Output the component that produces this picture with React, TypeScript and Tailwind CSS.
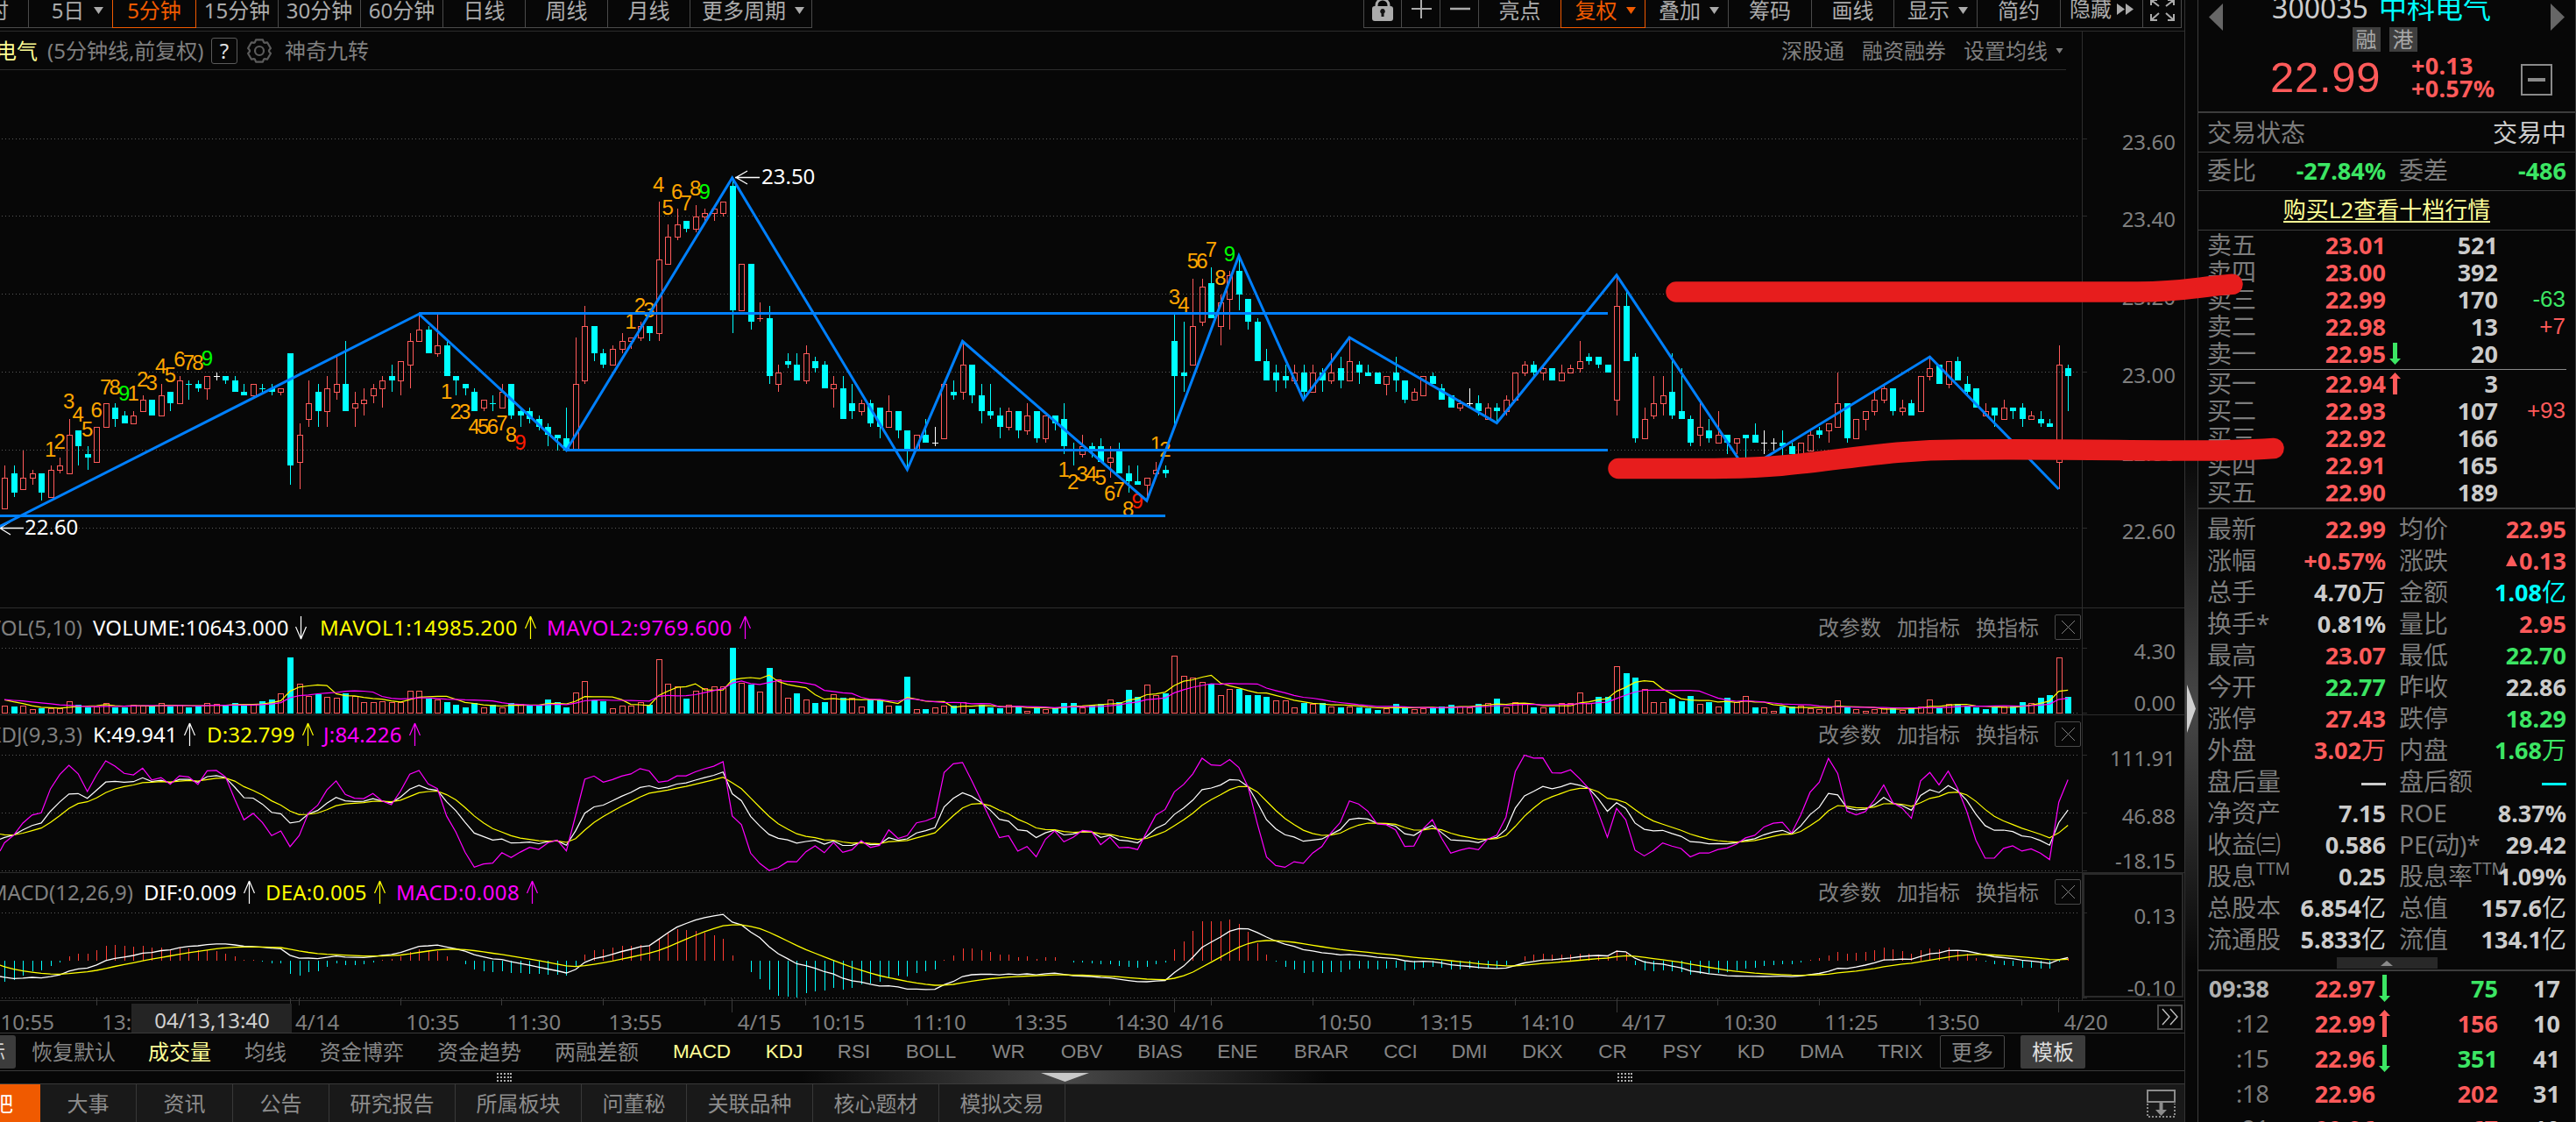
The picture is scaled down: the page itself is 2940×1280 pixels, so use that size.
import type { ReactNode } from "react";

const RED = "#ff5a5a";
const CYAN = "#00ffff";
const BLUE = "#0080ff";
const GRID = "#5a5a5a";
const LINE = "#2c2c2c";

// 5-minute candles in cents above 22.00: open close high low.
// Index FIRST is the first visible one, 0 is the open of 4/14 (48 candles a day).
const FIRST = -31;
const CANDLES = `65 73 76 65,74 69 76 68,70 73 80 70,73 74 75 71,74 69 74 67,68 75 76 68,75 76 78 74,74 84 88 74
85 81 85 76,79 78 81 75,77 86 86 77,86 92 92 86,91 88 92 86,89 87 90 87,87 89 90 87,90 93 94 90
93 89 93 89,89 94 97 89,95 92 95 90,92 98 99 92,97 97 98 93,97 96 98 95,96 99 99 93,99 99 100 98
99 98 99 97,98 95 99 95,95 94 97 94,94 97 97 94,96 96 97 95,96 95 97 94,95 96 96 94
105 76 105 71,77 84 87 70,88 92 98 86,95 90 97 86,90 96 99 86,95 97 104 93,97 90 108 90,91 92 95 86
92 93 96 89,94 96 97 92,96 98 99 91,99 98 102 95,98 103 103 94,102 108 110 96,108 111 115 108,111 105 112 105
105 107 115 104,107 99 108 99,99 98 99 94,97 96 97 94,95 90 96 90,91 93 93 90,92 92 94 90,91 95 97 91
97 89 97 88,90 89 91 86,90 88 91 87,88 86 89 85,86 84 87 81,84 83 84 80,83 80 91 80,80 97 109 80
98 112 117 97,112 105 112 103,105 102 106 101,102 106 107 102,106 108 110 105,108 109 109 106,109 112 113 108,112 110 112 108
110 129 144 108,128 135 138 128,135 138 142 134,139 137 139 136,137 140 143 136,140 141 142 139,141 142 142 139,141 144 144 140
148 116 150 110,116 128 128 116,128 113 128 111,114 114 118 113,114 99 117 97,97 100 102 95,103 102 105 101,102 98 105 98
98 105 107 97,103 101 104 100,102 96 103 96,96 97 99 91,96 88 99 88,92 90 97 88,90 92 93 89,92 87 93 86
91 86 91 83,86 90 94 86,90 85 90 83,85 80 85 75,80 84 84 80,84 82 88 82,82 82 86 81,83 97 97 83
95 94 98 93,95 102 108 93,102 94 102 92,94 90 97 87,90 89 97 88,89 86 91 83,86 90 91 85,90 85 90 83
85 89 92 84,90 83 90 82,83 89 89 82,89 87 89 85,88 81 92 79,80 80 82 76,79 81 84 78,81 80 82 78
81 77 83 77,77 78 81 73,80 74 82 74,74 72 76 69,72 71 76 71,71 73 73 67,74 75 77 74,75 74 76 73
108 99 115 86,100 99 113 95,102 112 124 102,113 122 124 112,123 114 127 114,112 118 120 107,119 125 126 111,126 120 130 116
119 113 119 111,113 103 114 103,103 98 106 98,100 98 102 95,99 98 102 96,98 100 102 97,100 95 102 93,95 100 102 95
100 98 101 95,98 100 105 97,101 98 104 96,98 103 109 98,102 100 103 97,100 99 102 99,100 97 100 97,97 99 99 94
100 98 104 95,98 93 98 92,93 95 96 93,94 99 99 94,99 97 100 97,96 93 97 93,94 91 94 91,91 92 93 90
92 92 96 91,92 90 94 89,88 91 92 88,91 90 92 87,90 93 94 89,93 100 100 93,100 102 103 99,102 100 103 99
100 101 102 98,101 98 101 98,98 100 102 98,100 101 102 100,101 103 108 100,104 103 105 102,104 102 104 101,102 100 102 100
93 117 125 89,117 103 121 103,104 83 105 82,83 88 91 83,89 92 99 88,92 94 99 89,95 89 105 88,90 88 101 88
88 82 89 81,84 86 93 81,85 83 88 82,82 84 90 82,84 82 84 79,82 83 83 79,84 83 84 77,84 82 87 82
82 82 85 79,82 82 83 80,82 81 85 78,81 79 82 79,79 82 82 79,80 84 85 80,85 84 86 83,85 87 87 82
86 92 100 86,92 83 92 82,83 88 88 83,88 90 90 85,90 93 95 89,93 96 97 92,96 90 96 89,90 91 93 89
92 89 93 89,90 99 99 90,99 101 104 98,102 97 102 97,97 103 103 96,103 98 104 98,97 95 99 94,96 91 96 91
89 90 92 89,91 89 91 86,88 91 93 88,91 90 91 88,91 88 92 86,88 89 90 88,88 87 90 86,87 86 88 86
77 102 107 70,101 99 102 90`
  .split(/[,\n]/)
  .map((s) => s.trim().split(" ").map(Number));

// volume, 194 = 4.30
const VOLUMES = [
  22, 20, 22, 11, 14, 14, 14, 35, 25, 18, 20, 29, 18, 18, 25, 22, 20, 29, 20, 25, 18, 20, 29, 27, 22, 29, 25, 27, 35, 41, 58,
  166, 89, 52, 56, 48, 45, 59, 50, 32, 32, 35, 34, 34, 68, 66, 44, 40, 33, 25, 18, 29, 18, 25, 16, 30, 27, 22, 25, 41, 33,
  18, 61, 95, 37, 35, 14, 22, 22, 32, 25, 162, 87, 79, 43, 66, 75, 79, 81,
  195, 90, 85, 63, 135, 100, 45, 59, 40, 30, 33, 56, 45, 45, 19, 41, 41, 22, 22, 109, 13, 12, 16, 22, 22, 33, 12, 25, 18,
  14, 24, 19, 8, 16, 13, 16, 30, 30, 18, 22, 27, 42, 33, 69, 48, 84, 53, 59,
  170, 111, 105, 92, 87, 53, 71, 72, 54, 54, 48, 37, 37, 16, 30, 27, 29, 21, 18, 21, 18, 14, 9, 15, 28, 16, 13, 14, 16, 19,
  26, 21, 16, 28, 29, 43, 16, 32, 29, 18, 16, 18, 29, 29, 61, 31, 48, 48,
  139, 119, 106, 71, 34, 32, 43, 35, 51, 27, 34, 19, 45, 34, 50, 18, 18, 8, 19, 19, 22, 15, 11, 18, 37, 18, 11, 8, 11, 15,
  16, 10, 14, 21, 40, 16, 27, 27, 22, 17, 11, 18, 21, 19, 33, 29, 46, 54, 165, 48,
];

const cx = (k: number) => 331 + 10.514 * k;
const priceY = (c: number) => 602.3 - (c - 60) * 4.437;
const volY = (v: number) => 813.6 - v * 0.383;
const kdjY = (v: number) => 927.2 - (v - 46.88) * 1.0118;
const macdY = (v: number) => 1096.4 - v * 4.21;

const toPoints = (values: number[], y: (v: number) => number) =>
  values.map((v, i) => `${cx(i + FIRST).toFixed(1)},${y(v).toFixed(1)}`).join(" ");

function average(n: number) {
  const all = [40, 40, 40, 40, 42, 50, 48, 44, 36, ...VOLUMES];
  return VOLUMES.map((_, i) => {
    const end = i + 10;
    return all.slice(end - n, end).reduce((a, b) => a + b, 0) / n;
  });
}

function kdj() {
  const highs = [110, 93, 93, 93, 82, 78, 78, 78, ...CANDLES.map((c) => c[2])];
  const lows = [60, 60, 60, 60, 60, 60, 60, 60, ...CANDLES.map((c) => c[3])];
  const out = { k: [] as number[], d: [] as number[], j: [] as number[] };
  let k = 15.5;
  let d = 23.5;
  CANDLES.forEach((c, i) => {
    const hi = Math.max(...highs.slice(i, i + 9));
    const lo = Math.min(...lows.slice(i, i + 9));
    k = (2 * k + ((c[1] - lo) / (hi - lo)) * 100) / 3;
    d = (2 * d + k) / 3;
    out.k.push(k);
    out.d.push(d);
    out.j.push(3 * k - 2 * d);
  });
  return out;
}

function macd() {
  let fast = 77.3;
  let slow = 81.7;
  let signal = -1.55;
  const dif = [fast - slow];
  const dea = [signal];
  CANDLES.slice(1).forEach((c) => {
    fast += (c[1] - fast) * (2 / 13);
    slow += (c[1] - slow) * (2 / 27);
    signal += (fast - slow - signal) * 0.2;
    dif.push(fast - slow);
    dea.push(signal);
  });
  return { dif, dea };
}

const ZIGZAG: [number, number][] = [
  [-31.6, 60.3], [14, 115], [30, 80], [48, 150], [67, 75], [73, 108], [93, 67], [103, 130],
  [110, 93], [115, 109], [131, 87], [144, 125], [158, 75], [178, 104], [192, 70],
];

// first candle of the run, digits, y of each digit
const TURNS: [number, string, number[]][] = [
  [-26, "123456789", [512, 503, 457, 472, 489, 467, 441, 441, 448]],
  [-17, "123456789", [448, 432, 436, 417, 427, 409, 413, 413, 408]],
  [17, "12345678R", [446, 469, 469, 486, 486, 486, 482, 495, 504]],
  [37, "123456789", [366, 348, 353, 210, 236, 218, 231, 214, 218]],
  [84, "12345678R", [535, 549, 540, 540, 544, 562, 558, 580, 571]],
  [94, "123456789", [506, 512, 338, 347, 297, 297, 284, 316, 289]],
];

function GridLines({ ys }: { ys: number[] }) {
  return (
    <g stroke={GRID} strokeDasharray="1 3" shapeRendering="crispEdges">
      {ys.map((y) => (
        <line key={y} x1={2} x2={2374} y1={y} y2={y} />
      ))}
    </g>
  );
}

function Axis({ top, height, labels, ticks, boxed }: { top: number; height: number; labels: [string, number][]; ticks: number[]; boxed?: boolean }) {
  return (
    <svg className="h-full w-[117px] shrink-0 overflow-visible" viewBox={`2377 ${top} 117 ${height}`}>
      {boxed && <rect x={2378} y={top + 1} width={113} height={height - 5} fill="none" stroke="#2a2a2a" strokeWidth={2} />}
      {ticks.map((y) => (
        <line key={y} x1={2377} x2={2382} y1={y} y2={y} stroke={LINE} />
      ))}
      {labels.map(([t, y]) => (
        <text key={t} x={2483} y={y + 9} textAnchor="end" fontSize={24} fill="#7f7f7f">{t}</text>
      ))}
    </svg>
  );
}

function PricePlot() {
  return (
    <svg className="h-full w-[2376px]" viewBox="0 80 2376 613">
      <GridLines ys={[158.5, 246.5, 335.5, 424.5, 513.5, 602.5]} />
      <g shapeRendering="crispEdges">
        {CANDLES.map(([o, c, h, l], i) => {
          const x = Math.round(cx(i + FIRST));
          const prev = i ? CANDLES[i - 1][1] : 0;
          const color = c > o ? RED : c < o ? CYAN : c > prev ? RED : c < prev ? CYAN : "#fff";
          const top = Math.round(priceY(Math.max(o, c)));
          const bottom = Math.round(priceY(Math.min(o, c)));
          return (
            <g key={i} fill={color}>
              <rect x={x} y={priceY(h)} width={1} height={top - priceY(h)} />
              <rect x={x} y={bottom} width={1} height={priceY(l) - bottom} />
              {c > o ? (
                <rect x={x - 2.5} y={top + 0.5} width={6} height={bottom - top} fill="none" stroke={color} />
              ) : (
                <rect x={x - 3} y={top} width={7} height={Math.max(bottom - top, 1)} />
              )}
            </g>
          );
        })}
      </g>
      <g fontSize={24} textAnchor="middle" fontFamily="Liberation Sans, Arial, sans-serif">
        {TURNS.map(([k, digits, ys]) =>
          ys.map((y, i) => (
            <text
              key={`${k}-${i}`}
              x={cx(k + i)}
              y={y + 8.5}
              fill={i < 8 ? "#ffa500" : digits[i] === "R" ? "#ff1a00" : "#00ff00"}
            >
              {i + 1}
            </text>
          )),
        )}
      </g>
      <g fill="none" stroke="#fff" strokeWidth={1.3}>
        <path d="M867 202.5H839M853 195l-13 7.5l13 7.5" />
        <path d="M27 602.5H0M12 595L0 602.5l12 7.5" />
      </g>
      <g fill="#fff" fontSize={24}>
        <text x={869} y={210}>23.50</text>
        <text x={28} y={610}>22.60</text>
      </g>
      <g fill="none" stroke={BLUE} strokeWidth={3}>
        <polyline points={ZIGZAG.map(([k, c]) => `${cx(k)},${priceY(c)}`).join(" ")} />
        <path strokeWidth={3} d="M478 357.5H1835M646 513.5H1835M0 588.5H1330" />
      </g>
    </svg>
  );
}

function VolumePlot() {
  return (
    <svg className="h-[81px] w-[2376px]" viewBox="0 734 2376 81">
      <GridLines ys={[739.5, 813.5]} />
      <g shapeRendering="crispEdges">
        {VOLUMES.map((v, i) => {
          const x = Math.round(cx(i + FIRST));
          const up = i === 0 || CANDLES[i][1] >= CANDLES[i - 1][1];
          const y = Math.round(volY(v));
          return up ? (
            <rect key={i} x={x - 2.5} y={y + 0.5} width={6} height={813 - y} fill="none" stroke={RED} />
          ) : (
            <rect key={i} x={x - 3} y={y} width={7} height={814 - y} fill={CYAN} />
          );
        })}
      </g>
      <polyline points={toPoints(average(5), volY)} fill="none" stroke="#ffff00" strokeWidth={1.2} />
      <polyline points={toPoints(average(10), volY)} fill="none" stroke="#ff00ff" strokeWidth={1.2} />
    </svg>
  );
}

function KdjPlot() {
  const { k, d, j } = kdj();
  return (
    <svg className="h-[139px] w-[2376px]" viewBox="0 856 2376 139">
      <GridLines ys={[861.5, 927.5, 993.5]} />
      <g fill="none" strokeWidth={1.2}>
        <polyline points={`0,957.5 ${toPoints(k, kdjY)}`} stroke="#fff" />
        <polyline points={`0,951.5 ${toPoints(d, kdjY)}`} stroke="#ffff00" />
        <polyline points={`0,971 ${toPoints(j, kdjY)}`} stroke="#ff00ff" />
      </g>
    </svg>
  );
}

function MacdPlot() {
  const { dif, dea } = macd();
  return (
    <svg className="h-[105px] w-[2376px]" viewBox="0 1036 2376 105">
      <GridLines ys={[1041.5, 1138.5]} />
      <g shapeRendering="crispEdges">
        {dif.map((v, i) => {
          const bar = 2 * (v - dea[i]);
          const y = macdY(bar);
          return (
            <rect
              key={i}
              x={Math.round(cx(i + FIRST))}
              y={Math.min(y, 1096.4)}
              width={1}
              height={Math.abs(y - 1096.4)}
              fill={bar > 0 ? "#ff3c32" : CYAN}
            />
          );
        })}
      </g>
      <g fill="none" strokeWidth={1.3}>
        <polyline points={`0,1114 ${toPoints(dif, macdY)}`} stroke="#fff" />
        <polyline points={`0,1101 ${toPoints(dea, macdY)}`} stroke="#ffff00" />
      </g>
    </svg>
  );
}

function ThinArrow({ down }: { down?: boolean }) {
  return (
    <svg className={`h-[28px] w-[14px] ${down ? "rotate-180" : ""}`} viewBox="0 0 14 28" fill="none" stroke="currentColor" strokeWidth={1.2}>
      <path d="M7.5 27V1M7.5 1L1.5 15M7.5 1l6 14" />
    </svg>
  );
}

function Panel({ name, nameWidth, values, height, children, axis }: {
  name: string;
  nameWidth: string;
  values: [string, string, boolean?][];
  height: string;
  children: ReactNode;
  axis: ReactNode;
}) {
  return (
    <div className={`flex shrink-0 border-b border-[#2c2c2c] ${height}`}>
      <div className="w-[2377px] shrink-0 border-r border-[#2c2c2c]">
        <div className="flex h-[40px] items-center pt-[3px] pr-[1px]">
          <div className={`mr-[12px] flex justify-end text-[#7f7f7f] ${nameWidth}`}>{name}</div>
          {values.map(([text, color, down]) => (
            <div key={text} className={`flex items-center gap-[7px] ${color}`}>
              {text}
              <ThinArrow down={down} />
            </div>
          ))}
          <div className="ml-auto flex items-center gap-[18px] text-[#7f7f7f]">
            <span>改参数</span>
            <span>加指标</span>
            <span>换指标</span>
            <span className="flex h-[29px] w-[30px] items-center justify-center rounded-[2px] border border-[#4a4a4a]">
              <svg className="h-[15px] w-[15px]" viewBox="0 0 15 15" stroke="#7f7f7f" strokeWidth={1}>
                <path d="M0 0l15 15M15 0L0 15" />
              </svg>
            </span>
          </div>
        </div>
        {children}
      </div>
      {axis}
    </div>
  );
}

const TIMES: [number, string][] = [
  [-32, "10:55"], [-21, "13:"], [12, "10:35"], [23, "11:30"], [34, "13:55"], [56, "10:15"], [67, "11:10"], [78, "13:35"], [89, "14:30"],
  [111, "10:50"], [122, "13:15"], [133, "14:10"], [155, "10:30"], [166, "11:25"], [177, "13:50"],
];
const DAYS: [number, string][] = [[0, "4/14"], [48, "4/15"], [96, "4/16"], [144, "4/17"], [192, "4/20"]];

function TimeAxis() {
  return (
    <div className="flex h-[37px] shrink-0 items-center justify-between border-b border-[#3a3a3a]">
      <svg className="h-[36px] w-[2440px] overflow-visible" viewBox="0 1142 2440 36">
        <g stroke="#3a3a3a" shapeRendering="crispEdges">
          {Array.from({ length: 20 }, (_, i) => cx(-21 + 11 * i)).map((x) => (
            <line key={x} x1={x} x2={x} y1={1139} y2={1147} />
          ))}
          {DAYS.map(([k]) => (
            <line key={k} x1={cx(k)} x2={cx(k)} y1={1139} y2={1155} />
          ))}
        </g>
        <g fontSize={24} fill="#7f7f7f">
          {TIMES.map(([k, t]) => (
            <text key={t} x={cx(k) + 6} y={1175}>{t}</text>
          ))}
          {DAYS.map(([k, t]) => (
            <text key={t} x={cx(k) + 6} y={1175}>{t}</text>
          ))}
        </g>
        <rect x={150} y={1145} width={183} height={33} fill="#242424" />
        <text x={242} y={1173} textAnchor="middle" fontSize={24} fill="#d0d0d0">04/13,13:40</text>
      </svg>
      <div className="mr-[2px] flex h-[29px] w-[29px] items-center justify-center border-2 border-[#4a4a4a]">
        <svg className="h-[20px] w-[20px]" viewBox="0 0 20 20" fill="none" stroke="#c0c0c0" strokeWidth={1.4}>
          <path d="M1 1l8 9l-8 9M10 1l8 9l-8 9" />
        </svg>
      </div>
    </div>
  );
}

const PERIODS: [string, string, boolean?][] = [
  ["分时", "w-[33px]"],
  ["5日", "w-[96px]", true],
  ["5分钟", "w-[95px]"],
  ["15分钟", "w-[94px]"],
  ["30分钟", "w-[94px]"],
  ["60分钟", "w-[94px]"],
  ["日线", "w-[94px]"],
  ["周线", "w-[94px]"],
  ["月线", "w-[94px]"],
  ["更多周期", "w-[139px]", true],
];

const TOOLS: [string, string, boolean?][] = [
  ["亮点", "w-[94px]"],
  ["复权", "w-[96px]", true],
  ["叠加", "w-[95px]", true],
  ["筹码", "w-[95px]"],
  ["画线", "w-[94px]"],
  ["显示", "w-[95px]", true],
  ["简约", "w-[95px]"],
];

function Caret() {
  return (
    <svg className="h-[8px] w-[11px]" viewBox="0 0 11 8" fill="currentColor">
      <path d="M0 0h11L5.5 8z" />
    </svg>
  );
}

function ToolCell({ label, width, caret, active }: { label: string; width: string; caret?: boolean; active?: boolean }) {
  return (
    <div
      className={`flex h-[32px] shrink-0 items-start justify-center border-r border-b leading-[24px] ${width} ${
        active ? "border-[#f05a00] text-[#f05a00] shadow-[-1px_0_0_#f05a00]" : "border-[#4a4a4a]"
      }`}
    >
      <span className={`flex items-center ${caret ? (label === "5日" ? "gap-[11px] pl-[16px]" : "gap-[10px] pl-[5px]") : ""}`}>
        {label}
        {caret && <Caret />}
      </span>
    </div>
  );
}

function Toolbar() {
  return (
    <div className="flex h-[36px] shrink-0 overflow-hidden border-b border-[#2c2c2c] text-[#ababab]">
      {PERIODS.map(([label, width, caret], i) =>
        i === 0 ? (
          <div key={label} className="flex h-[32px] w-[33px] shrink-0 justify-end border-r border-b border-[#4a4a4a] pr-[22px] leading-[24px]">
            {label}
          </div>
        ) : (
          <ToolCell key={label} label={label} width={width} caret={caret} active={i === 2} />
        ),
      )}
      <div className="ml-auto flex pr-[3px]">
        <div className="flex h-[32px] w-[44px] justify-center border-x border-b border-[#4a4a4a]">
          <svg className="h-[24px] w-[26px]" viewBox="0 0 26 24">
            <path d="M6 8V6a7 7 0 0 1 14 0v2" fill="none" stroke="#ababab" strokeWidth={3} />
            <rect x={1} y={7} width={24} height={17} rx={3} fill="#ababab" />
            <path d="M13 10a3 3 0 0 1 1.5 5.5V19h-3V15.5A3 3 0 0 1 13 10z" fill="#111" />
          </svg>
        </div>
        <div className="flex h-[32px] w-[44px] justify-center border-r border-b border-[#4a4a4a]">
          <svg className="h-[22px] w-[24px]" viewBox="0 0 24 22" stroke="#ababab" strokeWidth={2}>
            <path d="M1 10h23M12 0v21" />
          </svg>
        </div>
        <div className="flex h-[32px] w-[44px] justify-center border-r border-b border-[#4a4a4a]">
          <svg className="h-[22px] w-[24px]" viewBox="0 0 24 22" stroke="#ababab" strokeWidth={2.5}>
            <path d="M1 10h23" />
          </svg>
        </div>
        {TOOLS.map(([label, width, caret], i) => (
          <ToolCell key={label} label={label} width={width} caret={caret} active={i === 1} />
        ))}
        <div className="flex h-[32px] w-[94px] items-start justify-center gap-[6px] border-r border-b border-[#4a4a4a] leading-[20px]">
          隐藏
          <svg className="mt-[4px] h-[13px] w-[19px]" viewBox="0 0 19 13" fill="#ababab">
            <path d="M0 0l9 6.5L0 13zM10 0l9 6.5l-9 6.5z" />
          </svg>
        </div>
        <div className="flex h-[32px] w-[44px] justify-center border-r border-b border-[#4a4a4a]">
          <svg className="h-[24px] w-[28px]" viewBox="0 0 28 24" fill="none" stroke="#ababab" strokeWidth={2}>
            <path d="M1 6V0h7M1 0l9 7M27 6V0h-7M27 0l-9 7M1 16v7h7M1 23l9-8M27 16v7h-7M27 23l-9-8" />
          </svg>
        </div>
      </div>
    </div>
  );
}

// six rounded teeth
const GEAR = Array.from({ length: 6 }, (_, n) =>
  [[-17, 13.2], [17, 13.2], [27, 11], [33, 11]].map(([deg, r]) => {
    const a = ((n * 60 + deg - 90) * Math.PI) / 180;
    return `${(15 + r * Math.cos(a)).toFixed(1)},${(15 + r * Math.sin(a)).toFixed(1)}`;
  }),
)
  .flat()
  .join(" ");

function TitleRow() {
  return (
    <div className="flex h-[44px] shrink-0">
      <div className="flex w-[2358px] items-center overflow-hidden border-b border-[#2c2c2c] text-[#7f7f7f]">
        <span className="-ml-[53px] text-[#ffff96]">中科电气</span>
        <span className="ml-[11px] w-[180px]">(5分钟线,前复权)</span>
        <span className="ml-[7px] flex h-[30px] w-[30px] items-center justify-center rounded-[3px] border border-[#5a5a5a] text-[#e0e0e0]">?</span>
        <svg className="ml-[10px] h-[30px] w-[30px]" viewBox="0 0 30 30" fill="none" stroke="#5c5c5c" strokeWidth={2.2}>
          <polygon points={GEAR} strokeLinejoin="round" />
          <circle cx={15} cy={15} r={5} />
        </svg>
        <span className="ml-[14px]">神奇九转</span>
        <span className="ml-auto">深股通</span>
        <span className="ml-[20px]">融资融券</span>
        <span className="ml-[20px]">设置均线</span>
        <span className="mr-[2px] ml-[8px] scale-75">
          <Caret />
        </span>
      </div>
      <div className="ml-auto w-[117px] border-l border-[#2c2c2c]" />
    </div>
  );
}

const CN_INDICATORS: [string, string][] = [
  ["恢复默认", "w-[132px]"],
  ["成交量", "w-[110px]"],
  ["均线", "w-[86px]"],
  ["资金博弈", "w-[134px]"],
  ["资金趋势", "w-[134px]"],
  ["两融差额", "w-[134px]"],
];
const INDICATORS: [string, string][] = [
  ["MACD", "w-[106px]"],
  ["KDJ", "w-[82px]"],
  ["RSI", "w-[77px]"],
  ["BOLL", "w-[99px]"],
  ["WR", "w-[78px]"],
  ["OBV", "w-[89px]"],
  ["BIAS", "w-[90px]"],
  ["ENE", "w-[87px]"],
  ["BRAR", "w-[104px]"],
  ["CCI", "w-[77px]"],
  ["DMI", "w-[80px]"],
  ["DKX", "w-[87px]"],
  ["CR", "w-[73px]"],
  ["PSY", "w-[86px]"],
  ["KD", "w-[71px]"],
  ["DMA", "w-[90px]"],
  ["TRIX", "w-[90px]"],
];

function IndicatorBar() {
  return (
    <div className="flex h-[43px] shrink-0 items-center border-b border-[#3a3a3a] text-[#858585]">
      <span className="flex h-[38px] w-[18px] justify-end overflow-hidden rounded-r-[3px] bg-[#3c3c3c] pr-[12px] leading-[38px] text-[#d0d0d0]">指标</span>
      {CN_INDICATORS.map(([t, w], i) => (
        <span key={t} className={`text-center ${w} ${i === 1 ? "text-[#ffff96]" : ""}`}>{t}</span>
      ))}
      <div className="flex font-['Liberation_Sans',Arial,sans-serif] text-[22.5px]">
        {INDICATORS.map(([t, w], i) => (
          <span key={t} className={`text-center ${w} ${i < 2 ? "text-[#ffff96]" : ""}`}>{t}</span>
        ))}
      </div>
      <span className="flex h-[38px] w-[74px] items-center justify-center rounded-[2px] border border-[#4a4a4a]">更多</span>
      <span className="ml-[18px] flex h-[38px] w-[74px] items-center justify-center rounded-[2px] bg-[#3c3c3c] text-[#dedede]">模板</span>
    </div>
  );
}

function Grip() {
  return (
    <svg className="h-[10px] w-[17px]" viewBox="0 0 17 10" fill="#b0b0b0" shapeRendering="crispEdges">
      {[0, 1, 2, 3, 4].map((x) => [0, 1, 2].map((y) => <rect key={`${x}${y}`} x={x * 4 - (x > 3 ? 1 : 0)} y={y * 4} width={2} height={2} />))}
    </svg>
  );
}

function SplitterBar() {
  return (
    <div className="flex h-[15px] shrink-0 items-center border-b border-[#3a3a3a]">
      <div className="flex w-[915px] justify-end pr-[331px]">
        <Grip />
      </div>
      <div className="flex h-full w-[600px] items-center justify-center bg-linear-to-r from-transparent via-[#484848] to-transparent">
        <svg className="h-[10px] w-[55px]" viewBox="0 0 55 10" fill="#c8c8c8">
          <path d="M0 0h55L27.5 10z" />
        </svg>
      </div>
      <div className="pl-[331px]">
        <Grip />
      </div>
    </div>
  );
}

const BOTTOM_TABS: [string, string][] = [
  ["大事", "w-[110px]"],
  ["资讯", "w-[110px]"],
  ["公告", "w-[110px]"],
  ["研究报告", "w-[144px]"],
  ["所属板块", "w-[144px]"],
  ["问董秘", "w-[120px]"],
  ["关联品种", "w-[144px]"],
  ["核心题材", "w-[144px]"],
  ["模拟交易", "w-[144px]"],
];

function BottomTabs() {
  return (
    <div className="flex h-[43px] shrink-0 items-stretch overflow-hidden bg-[#191919] text-[#8c8c8c]">
      <div className="flex w-[46px] items-center justify-end bg-[#f05a00] pr-[31px] whitespace-nowrap text-white">股吧</div>
      {BOTTOM_TABS.map(([t, w]) => (
        <div key={t} className={`flex items-center justify-center border-r border-[#383838] ${w}`}>{t}</div>
      ))}
      <svg className="mt-[5px] mr-[10px] ml-auto h-[34px] w-[33px]" viewBox="0 0 33 34" fill="none" stroke="#8c8c8c" strokeWidth={2}>
        <path d="M1 15V2h31v13z" />
        <path d="M1 17v15h31V17" strokeDasharray="2 2" />
        <path d="M16.5 15v12" strokeWidth={4} />
        <path d="M10 24h13l-6.5 7z" fill="#8c8c8c" stroke="none" />
      </svg>
    </div>
  );
}

function PriceArrow({ up, tall }: { up?: boolean; tall?: boolean }) {
  return (
    <svg className={`w-[13px] ${tall ? "h-[31px]" : "h-[25px]"} ${up ? "" : "rotate-180"}`} viewBox={tall ? "0 0 13 31" : "0 0 13 25"} fill={up ? RED : "#3ce664"}>
      <path d={tall ? "M6.5 0L13 7H9v24H4V7H0z" : "M6.5 0L13 7H9v18H4V7H0z"} />
    </svg>
  );
}

const R = "text-[#ff5a5a]";
const G = "text-[#3ce664]";
const W = "text-[#cccccc]";
const C = "text-[#00ffff]";

const ASKS = [
  ["卖五", "23.01", "521"],
  ["卖四", "23.00", "392"],
  ["卖三", "22.99", "170", "-63"],
  ["卖二", "22.98", "13", "+7"],
  ["卖一", "22.95", "20", "", "down"],
];
const BIDS = [
  ["买一", "22.94", "3", "", "up"],
  ["买二", "22.93", "107", "+93"],
  ["买三", "22.92", "166"],
  ["买四", "22.91", "165"],
  ["买五", "22.90", "189"],
];

function OrderRow({ row: [label, price, volume, delta, arrow] }: { row: string[] }) {
  return (
    <div className="flex h-[31px] items-center pb-[4px]">
      <span className="w-[75px] text-[28px] text-[#7c7c7c]">{label}</span>
      <span className={`w-[129px] text-right font-bold ${R}`}>{price}</span>
      <span className="w-[18px] pl-[4px]">{arrow && <PriceArrow up={arrow === "up"} />}</span>
      <span className={`w-[110px] text-right font-bold ${W}`}>{volume}</span>
      <span className={`w-[77px] text-right font-['Liberation_Sans',Arial,sans-serif] text-[26px] ${delta?.startsWith("-") ? G : R}`}>{delta}</span>
    </div>
  );
}

const INFO: [string, string, string, string, string, string][] = [
  ["最新", "22.99", R, "均价", "22.95", R],
  ["涨幅", "+0.57%", R, "涨跌", "▲0.13", R],
  ["总手", "4.70万", W, "金额", "1.08亿", C],
  ["换手*", "0.81%", W, "量比", "2.95", R],
  ["最高", "23.07", R, "最低", "22.70", G],
  ["今开", "22.77", G, "昨收", "22.86", W],
  ["涨停", "27.43", R, "跌停", "18.29", G],
  ["外盘", "3.02万", R, "内盘", "1.68万", G],
  ["盘后量", "—", W, "盘后额", "—", C],
  ["净资产", "7.15", W, "ROE", "8.37%", W],
  ["收益㈢", "0.586", W, "PE(动)*", "29.42", W],
  ["股息TTM", "0.25", W, "股息率TTM", "1.09%", W],
  ["总股本", "6.854亿", W, "总值", "157.6亿", W],
  ["流通股", "5.833亿", W, "流值", "134.1亿", W],
];

// units and the up marker are set lighter than the digits
function Figure({ text, color }: { text: string; color: string }) {
  const unit = /[万亿]$/.test(text) ? text.slice(-1) : "";
  if (text === "—") {
    return (
      <span className={`flex justify-end ${color}`}>
        <i className="mt-[6px] block h-[3px] w-[28px] bg-current" />
      </span>
    );
  }
  const up = text.startsWith("▲");
  return (
    <span className={`flex items-center justify-end font-bold ${color}`}>
      {up && (
        <svg className="mr-[2px] h-[13px] w-[13px]" viewBox="0 0 13 13" fill="currentColor">
          <path d="M6.5 0L13 13H0z" />
        </svg>
      )}
      {text.replace(/[▲万亿]/g, "")}
      {unit && <span className="text-[28px] font-normal">{unit}</span>}
    </span>
  );
}

function Label({ text }: { text: string }) {
  const ttm = text.endsWith("TTM");
  return (
    <span className="flex w-0 text-[28px] whitespace-nowrap text-[#7c7c7c]">
      {text.replace("TTM", "")}
      {ttm && <span className="-mt-[8px] text-[19px]">TTM</span>}
    </span>
  );
}

const TICKS = [
  ["09:38", "22.97", "down", "75", "17"],
  [":12", "22.99", "up", "156", "10"],
  [":15", "22.96", "down", "351", "41"],
  [":18", "22.96", "", "202", "31"],
  [":21", "22.96", "", "67", "10"],
];

function Sidebar() {
  return (
    <div className="flex w-[432px] shrink-0 flex-col overflow-hidden border-x border-[#3c3c3c] text-[27px] leading-[31px]">
      <div className="flex h-[127px] shrink-0 flex-col">
        <div className="flex h-[31px] items-start justify-between px-[12px]">
          <svg className="mt-[4px] h-[31px] w-[16px] shrink-0" viewBox="0 0 16 31" fill="#666">
            <path d="M16 0v31L0 15.5z" />
          </svg>
          <div className="-mt-[11px] mr-[12px] flex text-[32px] leading-[40px]">
            <span className={W}>300035</span>
            <span className={`ml-[12px] ${C}`}>中科电气</span>
          </div>
          <svg className="mt-[4px] h-[31px] w-[16px] shrink-0" viewBox="0 0 16 31" fill="#666">
            <path d="M0 0v31l16-15.5z" />
          </svg>
        </div>
        <div className="flex justify-center gap-[10px] pr-[5px] text-[24px] leading-[28px] text-[#a8a8a8]">
          <span className="h-[28px] w-[32px] bg-[#3e3e3e] text-center">融</span>
          <span className="h-[28px] w-[32px] bg-[#3e3e3e] text-center">港</span>
        </div>
        <div className="flex">
          <span className={`mt-[4px] ml-[82px] w-[161px] font-['Liberation_Sans',Arial,sans-serif] text-[49px] leading-[50px] tracking-[0.7px] ${R}`}>22.99</span>
          <div className={`mt-[3px] w-[125px] leading-[26px] font-bold tracking-[0.3px] ${R}`}>
            <div>+0.13</div>
            <div>+0.57%</div>
          </div>
          <div className="mt-[14px] flex h-[36px] w-[36px] items-center justify-center border-2 border-[#8a8a8a]">
            <i className="block h-[4px] w-[20px] bg-[#8a8a8a]" />
          </div>
        </div>
      </div>
      <div className="flex h-[47px] shrink-0 items-center justify-between border-t-2 border-b border-[#3c3c3c] px-[10px] text-[28px]">
        <span className="text-[#7c7c7c]">交易状态</span>
        <span className={W}>交易中</span>
      </div>
      <div className="flex h-[44px] shrink-0 items-center border-b border-[#3c3c3c] px-[10px] pb-[2px]">
        <span className="w-[75px] text-[28px] text-[#7c7c7c]">委比</span>
        <span className={`w-[129px] text-right font-bold ${G}`}>-27.84%</span>
        <span className="pl-[15px] text-[28px] text-[#7c7c7c]">委差</span>
        <span className={`ml-auto font-bold ${G}`}>-486</span>
      </div>
      <div className="flex h-[45px] shrink-0 items-center justify-center border-b border-[#3c3c3c] text-[26px] text-[#ffff96]">
        <span className="border-b-2 border-[#ffff96] leading-[26px]">购买L2查看十档行情</span>
      </div>
      <div className="shrink-0 px-[10px] pt-[3px]">
        {ASKS.map((row) => <OrderRow key={row[0]} row={row} />)}
        <div className="mb-[2px] h-[1px] bg-[#8a8a8a]" />
        {BIDS.map((row) => <OrderRow key={row[0]} row={row} />)}
      </div>
      <div className="shrink-0 border-t-2 border-[#3c3c3c] px-[10px] pt-[6px]">
        {INFO.map(([l1, v1, c1, l2, v2, c2]) => (
          <div key={l1} className="flex h-[36px] items-center pb-[4px]">
            <Label text={l1} />
            <div className="w-[204px]"><Figure text={v1} color={c1} /></div>
            <div className="w-[15px]" />
            <Label text={l2} />
            <div className="flex-1"><Figure text={v2} color={c2} /></div>
          </div>
        ))}
      </div>
      <div className="mx-auto mt-[1px] flex h-[13px] w-[115px] shrink-0 items-center justify-center bg-[#282828]">
        <svg className="h-[6px] w-[14px]" viewBox="0 0 14 6" fill="#8a8a8a">
          <path d="M7 0l7 6H0z" />
        </svg>
      </div>
      <div className="mt-[1px] shrink-0 border-t-2 border-[#3c3c3c] px-[10px] pt-[1px]">
        {TICKS.map(([time, price, dir, vol, count], i) => (
          <div key={time} className="flex h-[40px] items-center pb-[3px] font-bold">
            <span className={`w-[71px] text-right ${i === 0 ? "text-[#b0b0b0]" : "font-normal text-[#7c7c7c]"}`}>{time}</span>
            <span className={`w-[121px] text-right ${R}`}>{price}</span>
            <span className="w-[18px] pl-[4px]">{dir && <PriceArrow up={dir === "up"} tall />}</span>
            <span className={`w-[122px] text-right ${i === 0 || i === 2 ? G : R}`}>{vol}</span>
            <span className={`w-[71px] text-right ${W}`}>{count}</span>
          </div>
        ))}
      </div>
    </div>
  );
}

export default function App() {
  return (
    <div className="relative flex h-[1280px] w-[2940px] overflow-hidden bg-[#070707] font-['Noto_Sans','Noto_Sans_CJK_SC',sans-serif] text-[24px] leading-[30px] whitespace-nowrap">
      <div className="flex w-[2494px] shrink-0 flex-col border-r border-[#333]">
        <Toolbar />
        <TitleRow />
        <div className="flex h-[614px] shrink-0 border-b border-[#2c2c2c]">
          <div className="w-[2377px] shrink-0 border-r border-[#2c2c2c]">
            <PricePlot />
          </div>
          <Axis
            top={80}
            height={613}
            ticks={[158.5, 246.5, 335.5, 424.5, 513.5, 602.5]}
            labels={[["23.60", 162], ["23.40", 250], ["23.20", 339], ["23.00", 428], ["22.80", 517], ["22.60", 606]]}
          />
        </div>
        <Panel
          name="VOL(5,10)"
          nameWidth="w-[94px]"
          values={[
            ["VOLUME:10643.000", "w-[259px] tracking-[0.2px] text-white", true],
            ["MAVOL1:14985.200", "w-[259px] tracking-[0.5px] text-[#ffff00]"],
            ["MAVOL2:9769.600", "tracking-[0.5px] text-[#ff00ff]"],
          ]}
          height="h-[122px]"
          axis={<Axis top={694} height={121} ticks={[739.5, 813.5]} labels={[["4.30", 743], ["0.00", 802]]} />}
        >
          <VolumePlot />
        </Panel>
        <Panel
          name="KDJ(9,3,3)"
          nameWidth="w-[94px]"
          values={[
            ["K:49.941", "w-[130px] text-white"],
            ["D:32.799", "w-[133px] tracking-[0.2px] text-[#ffff00]"],
            ["J:84.226", "tracking-[0.2px] text-[#ff00ff]"],
          ]}
          height="h-[180px]"
          axis={<Axis top={816} height={179} ticks={[861.5, 927.5, 993.5]} labels={[["111.91", 865], ["46.88", 931], ["-18.15", 982]]} />}
        >
          <KdjPlot />
        </Panel>
        <Panel
          name="MACD(12,26,9)"
          nameWidth="w-[152px]"
          values={[
            ["DIF:0.009", "w-[139px] text-white"],
            ["DEA:0.005", "w-[149px] tracking-[0.2px] text-[#ffff00]"],
            ["MACD:0.008", "tracking-[0.4px] text-[#ff00ff]"],
          ]}
          height="h-[146px]"
          axis={<Axis top={996} height={145} ticks={[1041.5, 1138.5]} labels={[["0.13", 1045], ["-0.10", 1127]]} boxed />}
        >
          <MacdPlot />
        </Panel>
        <TimeAxis />
        <IndicatorBar />
        <SplitterBar />
        <BottomTabs />
      </div>
      <div className="flex w-[14px] shrink-0 items-center bg-linear-to-b from-transparent from-40% via-[#484848] via-63% to-transparent to-86% pt-[336px]">
        <svg className="ml-[2px] h-[55px] w-[10px]" viewBox="0 0 10 55" fill="#d0d0d0">
          <path d="M0 0l10 27.5L0 55z" />
        </svg>
      </div>
      <Sidebar />

      {/* hand-drawn marker strokes over the chart and the quote panel */}
      <svg className="pointer-events-none absolute inset-0 h-[1280px] w-[2940px]" viewBox="0 0 2940 1280" fill="none" stroke="#e71d1d" strokeWidth={23.5} strokeLinecap="round">
        <path d="M1913 333H2440C2490 333 2510 327 2548 324.3" />
        <path d="M1847 534.5C1930 534.5 1985 535.5 2035 531C2105 525 2155 513 2240 513C2350 512 2430 514 2500 514C2560 514 2575 513 2595 511.5" />
      </svg>
    </div>
  );
}
